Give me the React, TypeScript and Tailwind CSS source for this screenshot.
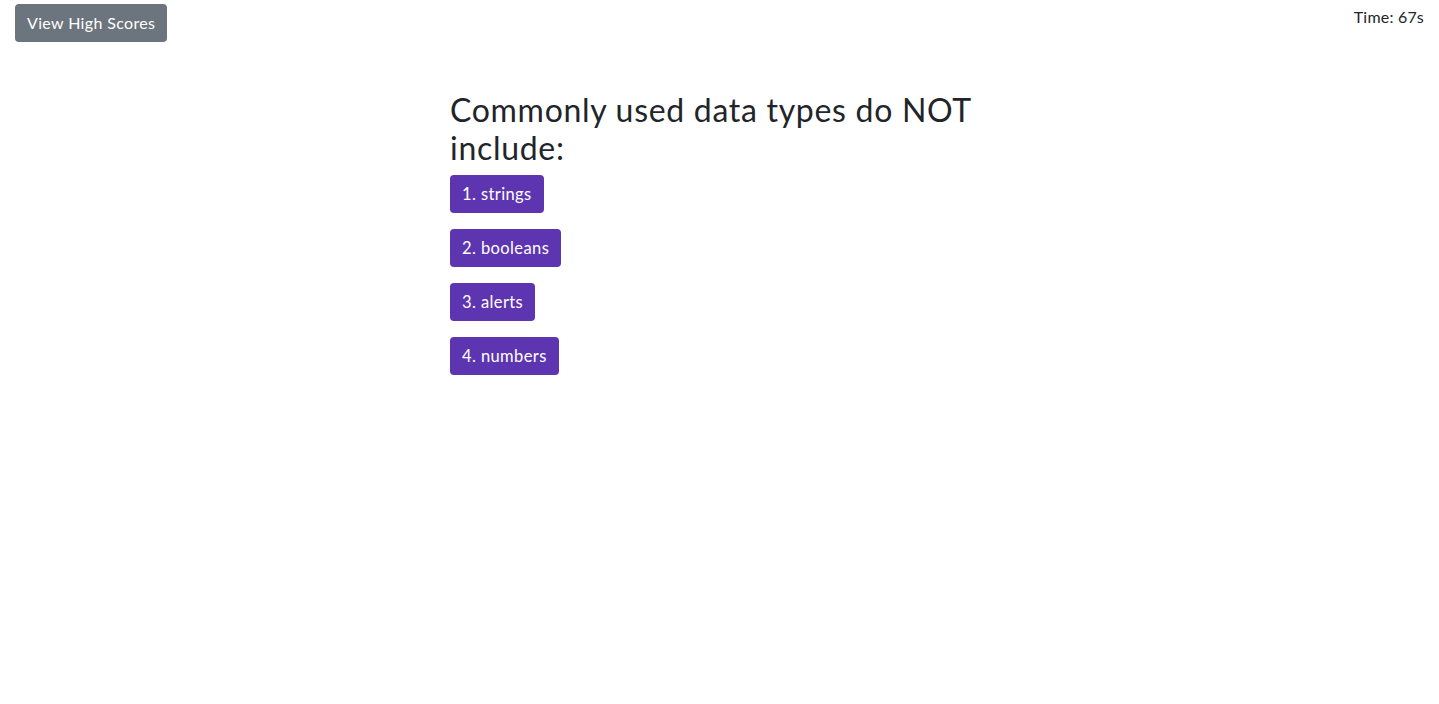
import React from "react";

export default function App() {
  const answers = ["1. strings", "2. booleans", "3. alerts", "4. numbers"];
  return (
    <div className="min-h-[704px] w-full bg-white text-[#212529]" style={{ fontFamily: "Lato, 'Open Sans', sans-serif" }}>
      <div className="flex items-start justify-between pl-[15px] pr-[15px] pt-[4px]">
        <button className="h-[38px] rounded-[4px] bg-[#6c757d] px-[12px] text-[16px] tracking-[0.35px] text-white">View High Scores</button>
        <div className="pt-[1px] text-[16px] leading-[24px] tracking-[0.2px]">Time: 67s</div>
      </div>
      <div className="ml-[450px] mt-[49px] w-[540px]">
        <h1 className="text-[32px] leading-[38px] font-normal tracking-[0.7px]">Commonly used data types do NOT include:</h1>
        <div className="mt-[8px] flex flex-col items-start gap-[16px]">
          {answers.map((a) => (
            <button key={a} className="h-[38px] rounded-[4px] bg-[#5e35b1] px-[12px] text-[16.5px] tracking-[0.4px] text-white">{a}</button>
          ))}
        </div>
      </div>
    </div>
  );
}
